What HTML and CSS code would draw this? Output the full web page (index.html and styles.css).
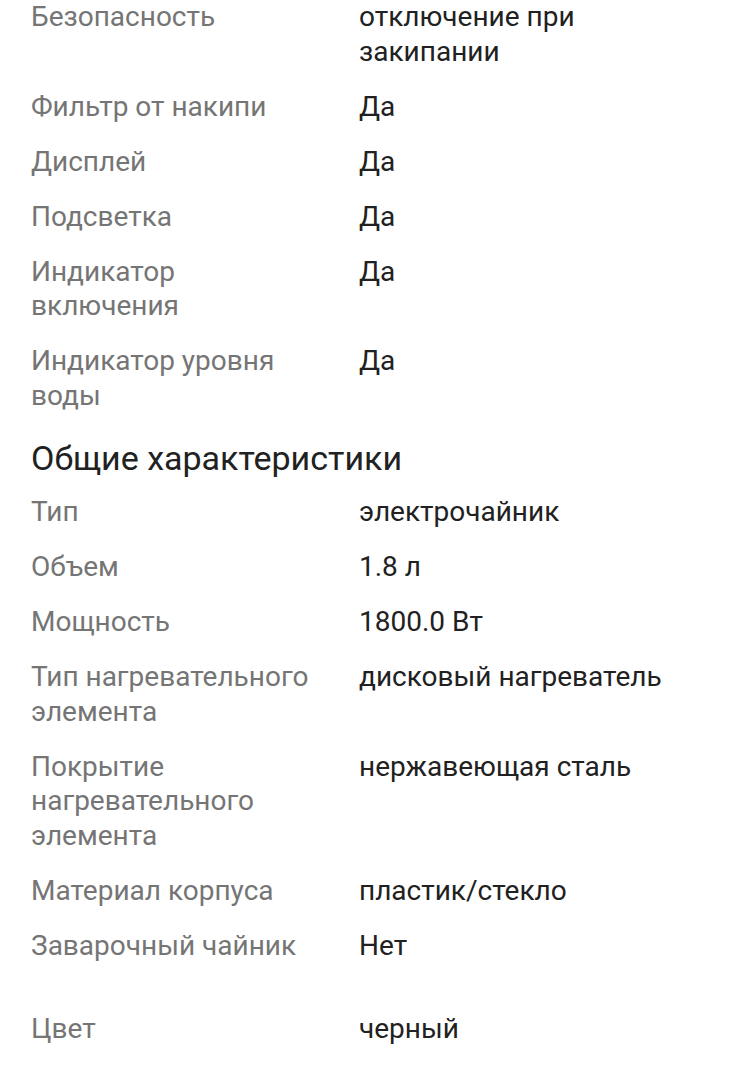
FILE: index.html
```html
<!DOCTYPE html>
<html lang="ru">
<head>
<meta charset="utf-8">
<link rel="stylesheet" href="styles.css">
</head>
<body>
<div class="specs">
  <dl class="grid">
    <dt>Безопасность</dt><dd>отключение при закипании</dd>
    <dt>Фильтр от накипи</dt><dd>Да</dd>
    <dt>Дисплей</dt><dd>Да</dd>
    <dt>Подсветка</dt><dd>Да</dd>
    <dt>Индикатор включения</dt><dd>Да</dd>
    <dt>Индикатор уровня воды</dt><dd>Да</dd>
  </dl>
  <h2 class="section-title">Общие характеристики</h2>
  <dl class="grid">
    <dt>Тип</dt><dd>электрочайник</dd>
    <dt>Объем</dt><dd>1.8 л</dd>
    <dt>Мощность</dt><dd>1800.0 Вт</dd>
    <dt>Тип нагревательного элемента</dt><dd>дисковый нагреватель</dd>
    <dt>Покрытие нагревательного элемента</dt><dd>нержавеющая сталь</dd>
    <dt>Материал корпуса</dt><dd>пластик/стекло</dd>
    <dt>Заварочный чайник</dt><dd>Нет</dd>
    <dt class="spaced">Цвет</dt><dd class="spaced">черный</dd>
  </dl>
</div>
</body>
</html>
```
FILE: styles.css
```css
html, body {
  margin: 0;
  padding: 0;
  background: #ffffff;
}
body {
  font-family: Roboto, "Noto Sans", sans-serif;
  -webkit-font-smoothing: antialiased;
}
.specs {
  padding: 0 60px 0 31px;
}
.grid {
  display: grid;
  grid-template-columns: 285px 1fr;
  column-gap: 43px;
  row-gap: 20.5px;
  margin: 0;
  font-size: 28px;
  line-height: 34.5px;
}
.grid dt {
  color: #757575;
  margin: 0;
}
.grid dd {
  color: #212121;
  margin: 0;
}
.grid .spaced {
  margin-top: 28px;
}
.section-title {
  margin: 23px 0 15px;
  font-size: 34px;
  font-weight: 400;
  line-height: 44px;
  color: #212121;
}
```
